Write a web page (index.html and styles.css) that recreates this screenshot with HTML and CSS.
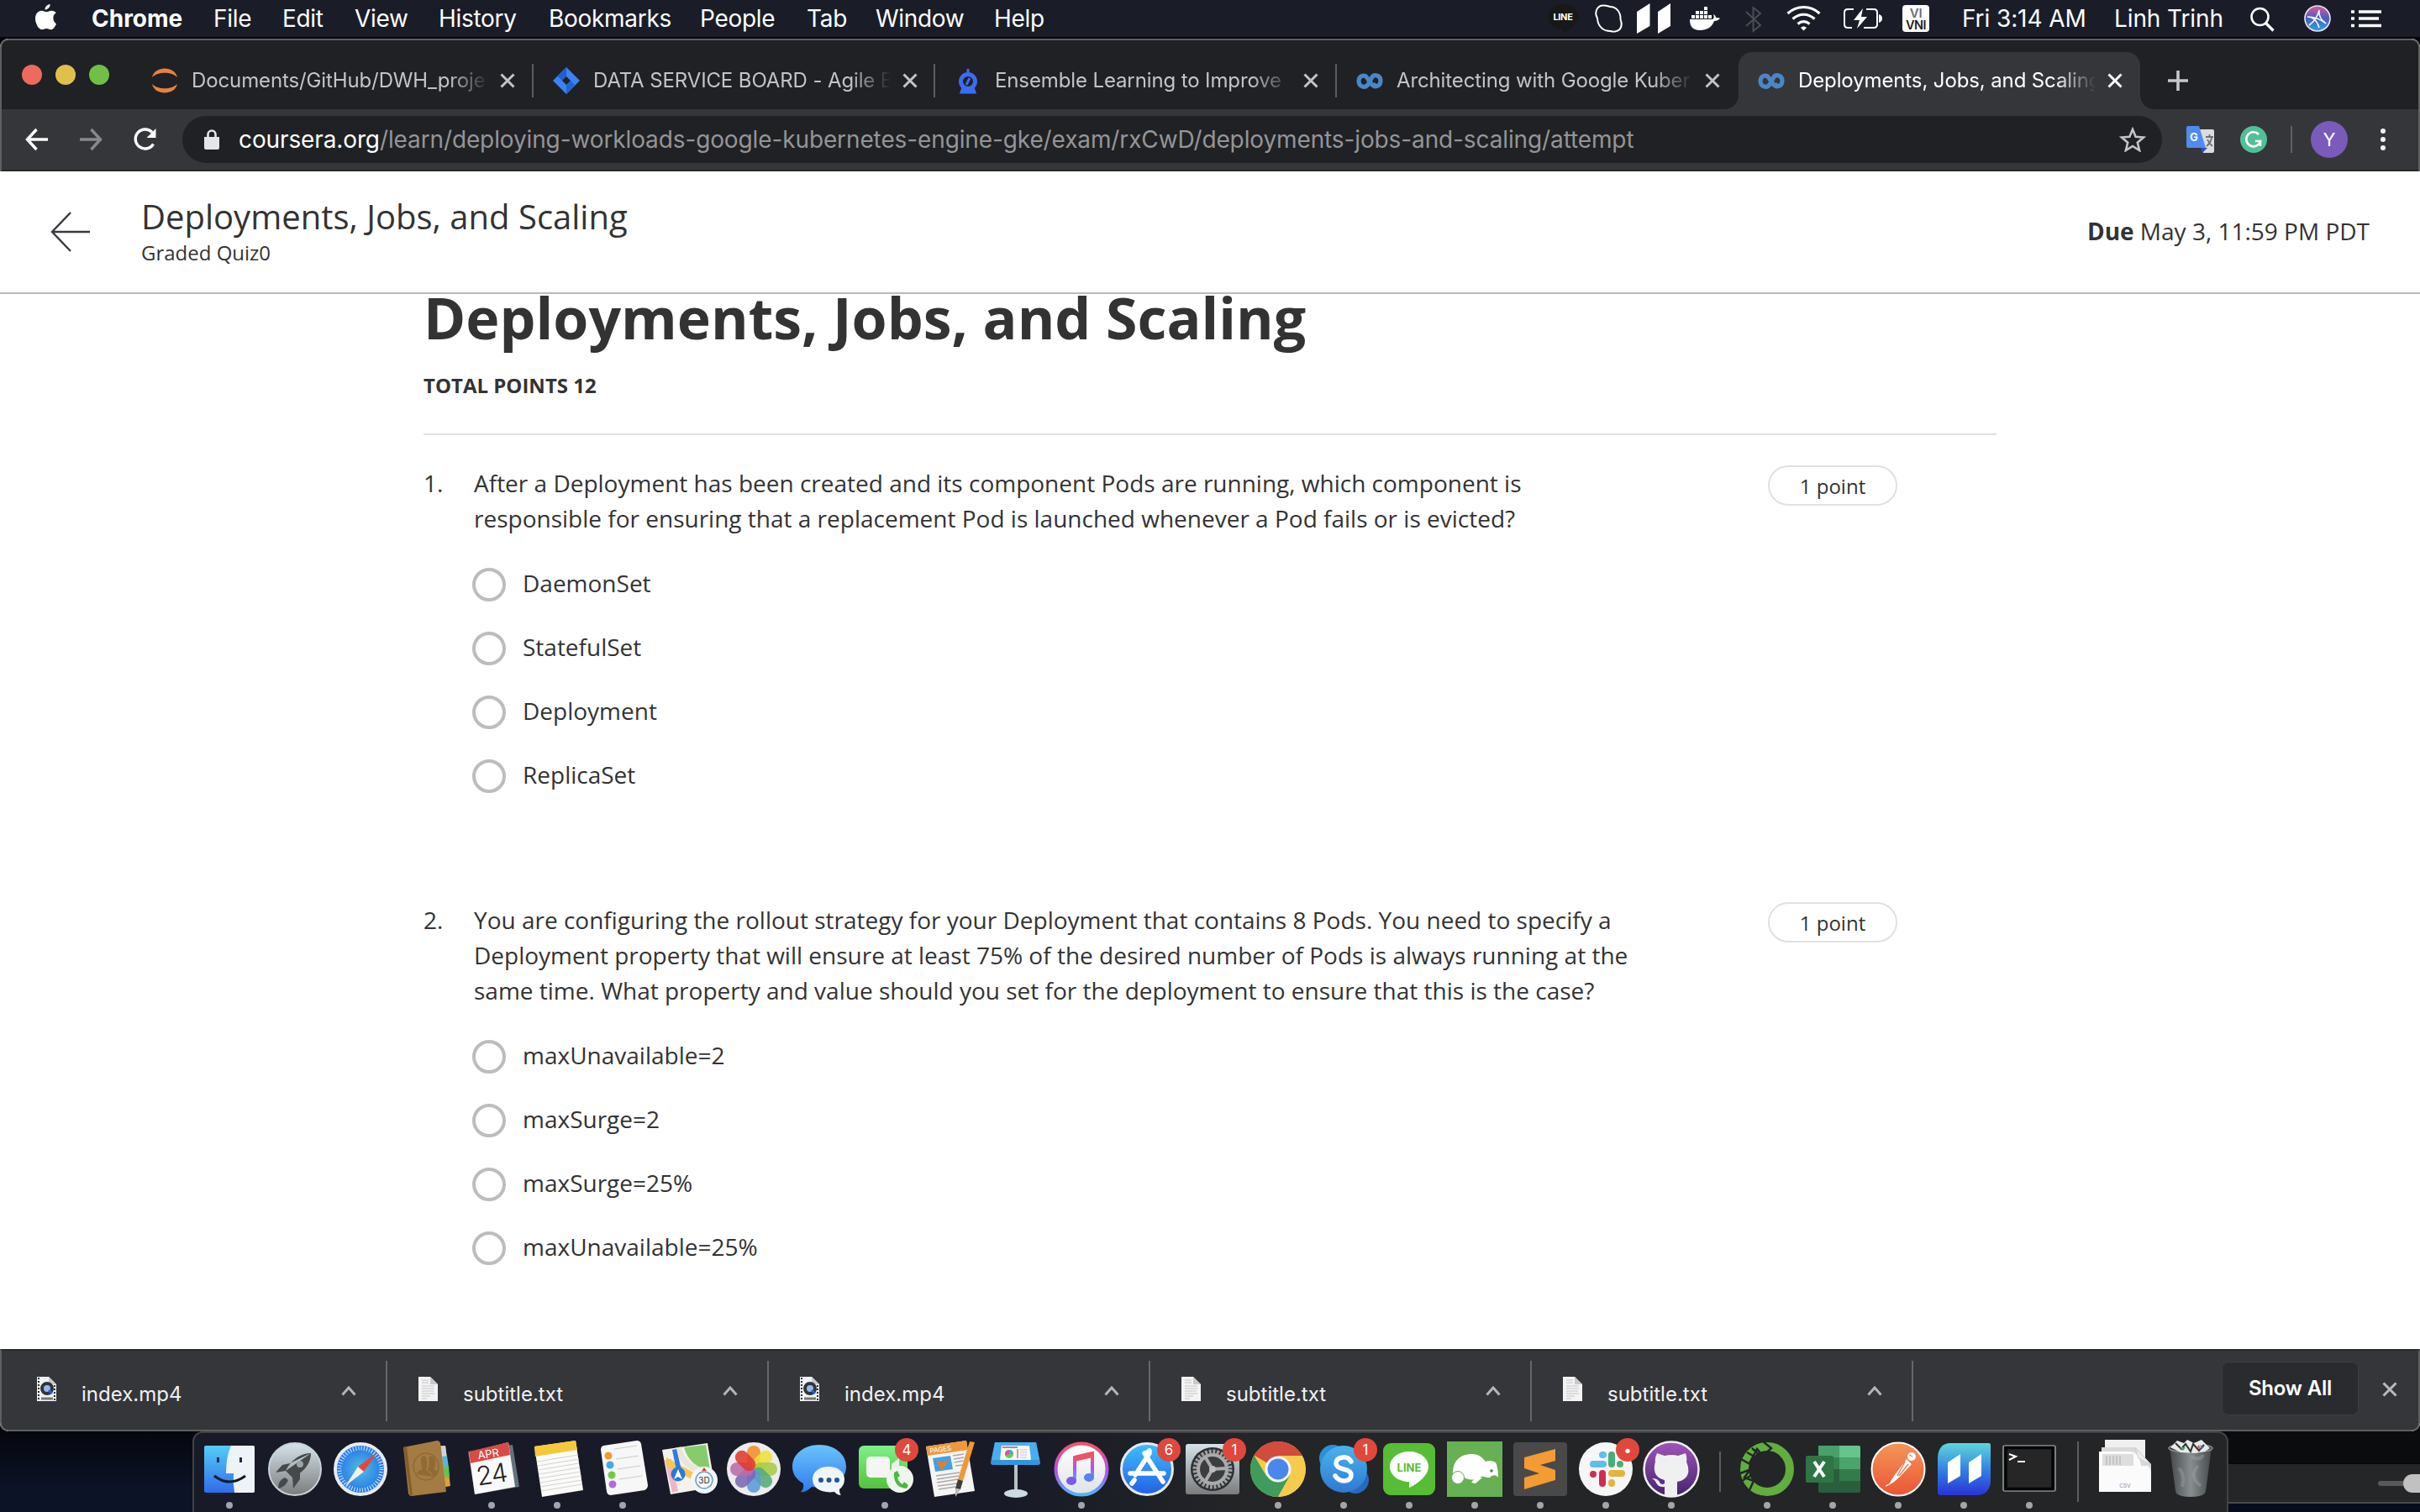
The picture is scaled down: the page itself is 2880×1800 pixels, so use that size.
FILE: index.html
```html
<!DOCTYPE html>
<html lang="en">
<head>
<meta charset="utf-8">
<title>Deployments, Jobs, and Scaling</title>
<link rel="stylesheet" href="styles.css">
</head>
<body>
<svg class="defs" width="0" height="0" aria-hidden="true">
  <defs>
    <linearGradient id="gFinder" x2="0" y2="1"><stop stop-color="#55cdf8"/><stop offset="1" stop-color="#2f6cea"/></linearGradient>
    <linearGradient id="gSilver" x2="0" y2="1"><stop stop-color="#d6e2ea"/><stop offset="1" stop-color="#7b7c7c"/></linearGradient>
    <radialGradient id="gSafari"><stop stop-color="#4fc0dc"/><stop offset="1" stop-color="#2372ea"/></radialGradient>
    <linearGradient id="gMsg" x2="0" y2="1"><stop stop-color="#6cc3fb"/><stop offset="1" stop-color="#2f7cf0"/></linearGradient>
    <linearGradient id="gGreen" x2="0" y2="1"><stop stop-color="#7df08a"/><stop offset="1" stop-color="#53c33b"/></linearGradient>
    <linearGradient id="gTunes" x2="0" y2="1"><stop stop-color="#f2566a"/><stop offset=".55" stop-color="#b052ea"/><stop offset="1" stop-color="#50b4f8"/></linearGradient>
    <linearGradient id="gStore" x2="0" y2="1"><stop stop-color="#3fc0fa"/><stop offset="1" stop-color="#245ee8"/></linearGradient>
    <linearGradient id="gSkype" x2="0" y2="1"><stop stop-color="#49b4ee"/><stop offset="1" stop-color="#2f79d2"/></linearGradient>
    <linearGradient id="gHub" x2="0" y2="1"><stop stop-color="#a255b8"/><stop offset="1" stop-color="#44246f"/></linearGradient>
    <linearGradient id="gPost" x2="0" y2="1"><stop stop-color="#f3975a"/><stop offset="1" stop-color="#ec5534"/></linearGradient>
    <linearGradient id="gM" x2="0" y2="1"><stop stop-color="#5fd6dc"/><stop offset=".5" stop-color="#3383e2"/><stop offset="1" stop-color="#2a32d8"/></linearGradient>
    <linearGradient id="gTrash"><stop stop-color="#44484b"/><stop offset=".5" stop-color="#888d90"/><stop offset="1" stop-color="#45494c"/></linearGradient>
    <linearGradient id="gWhite" x2="0" y2="1"><stop stop-color="#fff"/><stop offset="1" stop-color="#dfe3e6"/></linearGradient>
    <linearGradient id="gSiri" x2="0" y2="1"><stop stop-color="#e0559f"/><stop offset=".5" stop-color="#4a5bc0"/><stop offset="1" stop-color="#2fa6e0"/></linearGradient>
    <symbol id="coursera" viewBox="0 0 32 20"><path d="M23.5 13.3C21.8 16 19.8 16.5 18 14L12.8 6.4C10.5 3 4 3 3 10c0 8 8 9 11 4.800l4.500-8.300C21 2 29 3 29 10c0 7-7 8.500-9.500 5" fill="none" stroke="#4a86c8" stroke-width="5.200"/></symbol>
    <symbol id="x" viewBox="0 0 18 18"><path d="M1.500 1.500l15 15M16.500 1.500l-15 15" fill="none" stroke="currentColor" stroke-width="3"/></symbol>
    <symbol id="chev" viewBox="0 0 18 12"><path d="M1.500 10.500L9 2l7.500 8.500" fill="none" stroke="#b4b5b7" stroke-width="3"/></symbol>
    <symbol id="movie" viewBox="0 0 24 32"><path d="M0 1h14l9 9v20H0z" fill="#f1f2f3"/><path d="M14 1v9h9z" fill="#c8c9ca"/><path d="M2 2v27M21 11v18" stroke="#333" stroke-width="2" stroke-dasharray="2 2"/><circle cx="12" cy="15" r="6" fill="#9db8e8" stroke="#30343c" stroke-width="4"/><path d="M14 17l4 4" stroke="#2466d8" stroke-width="3"/><path d="M5 27h14" stroke="#777" stroke-width="3"/></symbol>
    <symbol id="page" viewBox="0 0 24 32"><path d="M0 1h14l9 9v20H0z" fill="#f3f3f3"/><path d="M14 1v9h9z" fill="#c8c9ca"/><path d="M4 5h8M4 8h8M4 12h15M4 15h15M4 18h14M4 21h15M4 24h10M4 27h6" stroke="#c6c6c6"/></symbol>
  </defs>
</svg>

<header class="menubar">
  <svg class="apple" width="28" height="34" viewBox="0 0 28 34"><path fill="#fff" d="M19 1c.3 3.600-3 7-6.200 6.800C12.400 4.500 15.600 1.300 19 1zM26.500 25.500c-1.700 3.700-3.700 7-6.300 7-2 0-2.800-1.300-5.600-1.300S11 32.500 9 32.500C4.800 32.500 1 24.500 1 18.800 1 12.600 4.700 9 8.600 9c2.500 0 4.300 1.500 6 1.500S18.200 9 21 9c2.200 0 4 1 5.300 2.800-5 3-4.300 10.500.2 13.700z" transform="scale(.98 .96)"/></svg>
  <nav class="menus"><b>Chrome</b><span>File</span><span>Edit</span><span>View</span><span>History</span><span>Bookmarks</span><span>People</span><span>Tab</span><span>Window</span><span>Help</span></nav>
  <div class="tray">
    <svg width="50" height="44" viewBox="1840 0 50 44"><path d="M1860 5c10 0 18 6 18 15 0 8-10 15-18 20v-5c-10 0-18-6-18-15s8-15 18-15z" fill="#171817"/><text x="1860" y="24" font-size="11" font-weight="700" letter-spacing="-.3" text-anchor="middle" fill="#fff">LINE</text></svg>
    <svg width="50" height="44" viewBox="1890 0 50 44"><path d="M1907 6.500c4-.5 7 1 9 1.500 8 0 13 7 12.500 15 2 5 1.500 9-1 12-3 3-8 3-11 2-9 0-15-6-15.500-15-2-4-2-9 0-12 2-2.500 4-3.500 6-3.500z" fill="none" stroke="#fff" stroke-width="2"/></svg>
    <svg width="60" height="44" viewBox="1940 0 60 44"><path d="M1948 14l15.500-10v27L1948 40zM1973 14l15-10v27l-15 9z" fill="#fff"/></svg>
    <svg width="60" height="44" viewBox="2000 0 60 44"><path d="M2011 23h27c2-1 2-4 1-6 2 1 3 2 3 4 2 0 4 0 5 1-2 2-4 3-7 3-3 8-9 11-17 11-9 0-12-5-12-13zM2013 18h4v4h-4zM2018 18h4v4h-4zM2023 18h4v4h-4zM2028 18h4v4h-4zM2033 18h4v4h-4zM2018 13h4v4h-4zM2023 13h4v4h-4zM2028 13h4v4h-4zM2028 8h4v4h-4z" fill="#fff"/></svg>
    <svg width="50" height="44" viewBox="2060 0 50 44"><path d="M2078 14l17 16-8.500 7V9l8.500 7-17 15" fill="none" stroke="#4a4d55" stroke-width="2"/></svg>
    <svg width="70" height="44" viewBox="2110 0 70 44"><path d="M2127.500 16c11-10 27-10 38 0M2133.500 22.500c8-7 18-7 26 0M2139.500 28.500c5-4 9-4 14 0" fill="none" stroke="#fff" stroke-width="3.200"/><path d="M2143 33c2-2 5-2 7 0l-3.500 3.500z" fill="#fff"/></svg>
    <svg width="70" height="44" viewBox="2180 0 70 44"><path d="M2206 11h-7q-4 0-4 4v14q0 4 4 4h5M2221 11h9q4 0 4 4v14q0 4-4 4h-12" fill="none" stroke="#fff" stroke-width="2"/><path d="M2217 10l-11 14h7l-3 10 12-14h-7zM2236 17q4 1 4 5t-4 5z" fill="#fff"/></svg>
    <svg width="70" height="44" viewBox="2250 0 70 44"><rect x="2264" y="6" width="32" height="32" rx="4" fill="#fff"/><text x="2280" y="21" font-size="15" font-weight="600" text-anchor="middle" fill="#6b6e75">VI</text><text x="2280" y="35" font-size="14.500" font-weight="600" letter-spacing="-.5" text-anchor="middle" fill="#1c1f28">VNI</text></svg>
    <span class="clock">Fri 3:14 AM</span>
    <span class="user">Linh Trinh</span>
    <svg width="70" height="44" viewBox="2660 0 70 44"><circle cx="2689.500" cy="20" r="10" fill="none" stroke="#fff" stroke-width="2.600"/><path d="M2696.500 27.500l9 9" stroke="#fff" stroke-width="3.200"/></svg>
    <svg width="60" height="44" viewBox="2730 0 60 44"><circle cx="2758" cy="22" r="15" fill="url(#gSiri)" stroke="#e6e8ee" stroke-width="1.600"/><path d="M2748 30q9-6 12-18-1 10 8 16-10-8-22-8 10 0 14 13" fill="none" stroke="#eafcff" stroke-width="1.600"/></svg>
    <svg width="90" height="44" viewBox="2790 0 90 44"><path d="M2798 14h4M2807 14h27M2798 22h4M2807 22h24M2798 30.500h4M2807 30.500h27" stroke="#fff" stroke-width="3.600"/></svg>
  </div>
</header>

<section class="window">
  <div class="tabstrip">
    <div class="lights"><i class="red"></i><i class="yellow"></i><i class="green"></i></div>
    <div class="tab">
      <svg width="32" height="32" viewBox="0 0 32 32"><path d="M1 12C4-2 28-2 31 12 24 5 8 5 1 12zM1 20c3 14 27 14 30 0-7 7-23 7-30 0z" fill="#e8823e"/></svg>
      <span class="title">Documents/GitHub/DWH_proje</span><svg class="close" width="18" height="18"><use href="#x"/></svg>
    </div>
    <div class="tab">
      <svg width="32" height="32" viewBox="0 0 32 32"><path d="M16 0l16 16-16 16L0 16z" fill="#3b82f6"/><path d="M16 0v11l-5 5L5.500 10.500z" fill="#1f5fd0"/><path d="M16 32V21l5-5 5.500 5.500z" fill="#2463d6"/><path d="M16 11l5 5-5 5-5-5z" fill="#202124"/></svg>
      <span class="title">DATA SERVICE BOARD - Agile B</span><svg class="close" width="18" height="18"><use href="#x"/></svg>
    </div>
    <div class="tab">
      <svg width="32" height="32" viewBox="0 0 32 32"><path d="M16 2v6M8 30l2-6h12l2 6z" stroke="#3a6df0" stroke-width="3" fill="#3a6df0"/><circle cx="16" cy="17" r="8.500" fill="#202124" stroke="#3a6df0" stroke-width="5"/><path d="M18 13l-4 8" stroke="#3a6df0" stroke-width="3"/></svg>
      <span class="title">Ensemble Learning to Improve</span><svg class="close" width="18" height="18"><use href="#x"/></svg>
    </div>
    <div class="tab last">
      <svg width="32" height="20"><use href="#coursera"/></svg>
      <span class="title">Architecting with Google Kuber</span><svg class="close" width="18" height="18"><use href="#x"/></svg>
    </div>
    <div class="tab active">
      <svg width="32" height="20"><use href="#coursera"/></svg>
      <span class="title">Deployments, Jobs, and Scaling</span><svg class="close" width="18" height="18"><use href="#x"/></svg>
    </div>
    <svg class="plus" width="24" height="24" viewBox="0 0 24 24"><path d="M12 0v24M0 12h24" stroke="#c6c7c9" stroke-width="3.600"/></svg>
  </div>

  <div class="toolbar">
    <svg width="28" height="28" viewBox="0 0 28 28"><path d="M13.500 2L2.500 14l11 12M3 14h24" fill="none" stroke="#fff" stroke-width="3.400"/></svg>
    <svg class="fwd" width="28" height="28" viewBox="0 0 28 28"><path d="M14.500 2l11 12-11 12M25 14H1" fill="none" stroke="#88898c" stroke-width="3.400"/></svg>
    <svg class="reload" width="30" height="30" viewBox="0 0 30 30"><path d="M24.500 20.500A11.500 11.500 0 1 1 23 6.500" fill="none" stroke="#fff" stroke-width="3.400"/><path d="M27.500 2v11H16.500z" fill="#fff"/></svg>
    <div class="omnibox">
      <svg width="18" height="24" viewBox="0 0 18 24"><path d="M0 9h18v13q0 2-2 2H2q-2 0-2-2z" fill="#e4e5e7"/><path d="M4.500 10V6a4.500 4.500 0 0 1 9 0v4" fill="none" stroke="#e4e5e7" stroke-width="2.600"/></svg>
      <span class="url"><em>coursera.org</em>/learn/deploying-workloads-google-kubernetes-engine-gke/exam/rxCwD/deployments-jobs-and-scaling/attempt</span>
      <svg class="star" width="32" height="30" viewBox="0 0 32 30"><path d="M16 3l3.600 8.800 9.400.7-7.200 6.200 2.300 9.300-8.100-5-8.100 5 2.300-9.300L3 12.500l9.400-.7z" fill="none" stroke="#c4c5c7" stroke-width="2.600"/></svg>
    </div>
    <svg class="translate" width="34" height="34" viewBox="0 0 34 34"><path d="M14 5h17q2 0 2 2v24q0 2-2 2H20z" fill="#dcdcdc"/><path d="M17 27h8l-6 6z" fill="#2f4fb8"/><path d="M2 1h13l8 26H2q-2 0-2-2V3q0-2 2-2z" fill="#4f8bf0"/><path d="M23 14h9M27.500 11v3M24 25q5-4 6-10M25 17q2 5 6 8" stroke="#6a6f78" stroke-width="1.800" fill="none"/><text x="4" y="19" font-size="13" font-weight="700" fill="#fff">G</text></svg>
    <svg class="gram" width="32" height="32" viewBox="0 0 32 32"><circle cx="16" cy="16" r="16" fill="#52bf98"/><path d="M22 10a8.500 8.500 0 1 0 2 8h-6M24 18v6" fill="none" stroke="#fff" stroke-width="2.600"/></svg>
    <i class="rule"></i>
    <div class="avatar">Y</div>
    <svg class="kebab" width="8" height="28" viewBox="0 0 8 28"><g fill="#f1f1f1"><circle cx="4" cy="4" r="3"/><circle cx="4" cy="14" r="3"/><circle cx="4" cy="24" r="3"/></g></svg>
  </div>

  <div class="quizbar">
    <svg width="48" height="48" viewBox="0 0 48 48"><path d="M24 1L2 24l22 23M2 24h45" fill="none" stroke="#373a3f" stroke-width="2.400"/></svg>
    <div class="heading"><div class="name">Deployments, Jobs, and Scaling</div><div class="kind">Graded Quiz0</div></div>
    <div class="due"><b>Due</b> May 3, 11:59 PM PDT</div>
  </div>

  <main class="quiz">
    <h1>Deployments, Jobs, and Scaling</h1>
    <div class="total">TOTAL POINTS 12</div>
    <section class="question">
      <span class="num">1.</span>
      <div>
        <p>After a Deployment has been created and its component Pods are running, which component is<br>responsible for ensuring that a replacement Pod is launched whenever a Pod fails or is evicted?</p>
        <ul><li>DaemonSet</li><li>StatefulSet</li><li>Deployment</li><li>ReplicaSet</li></ul>
      </div>
      <span class="points">1 point</span>
    </section>
    <section class="question">
      <span class="num">2.</span>
      <div>
        <p>You are configuring the rollout strategy for your Deployment that contains 8 Pods. You need to specify a<br>Deployment property that will ensure at least 75% of the desired number of Pods is always running at the<br>same time. What property and value should you set for the deployment to ensure that this is the case?</p>
        <ul><li>maxUnavailable=2</li><li>maxSurge=2</li><li>maxSurge=25%</li><li>maxUnavailable=25%</li></ul>
      </div>
      <span class="points">1 point</span>
    </section>
  </main>

  <footer class="downloads">
    <div class="file"><svg width="24" height="32"><use href="#movie"/></svg><span>index.mp4</span><svg class="chev" width="18" height="12"><use href="#chev"/></svg></div>
    <div class="file"><svg width="24" height="32"><use href="#page"/></svg><span>subtitle.txt</span><svg class="chev" width="18" height="12"><use href="#chev"/></svg></div>
    <div class="file"><svg width="24" height="32"><use href="#movie"/></svg><span>index.mp4</span><svg class="chev" width="18" height="12"><use href="#chev"/></svg></div>
    <div class="file"><svg width="24" height="32"><use href="#page"/></svg><span>subtitle.txt</span><svg class="chev" width="18" height="12"><use href="#chev"/></svg></div>
    <div class="file"><svg width="24" height="32"><use href="#page"/></svg><span>subtitle.txt</span><svg class="chev" width="18" height="12"><use href="#chev"/></svg></div>
    <button class="showall">Show All</button>
    <svg class="dismiss" width="18" height="18"><use href="#x"/></svg>
  </footer>
</section>

<div class="desk">
<div class="dock">
  <div class="app on"><svg viewBox="0 0 78 94"><rect x="9" y="15" width="60" height="56" rx="2" fill="url(#gFinder)"/><path d="M41 15h26q2 0 2 2v52q0 2-2 2H45q-2-12-1-23h-9q0-20 6-33z" fill="#eef3f8"/><path d="M25.500 29v6M52.500 29v6" stroke="#1c2c42" stroke-width="3"/><path d="M21 51q18 14 37 0" fill="none" stroke="#111c2a" stroke-width="3"/></svg></div>
  <div class="app"><svg viewBox="0 0 78 94"><circle cx="39" cy="43" r="31" fill="url(#gSilver)" stroke="#c7d3db" stroke-width="2"/><path d="M58 24c-14 0-25 10-30 21l-12 2 8-9 9-2m-5 9l8 8c11-5 22-15 22-29zM36 53l1 13 8-11v-8zM27 53q-8 3-8 13 9-2 12-10z" fill="#45494c"/><circle cx="45" cy="37" r="4" fill="#9aa4aa"/></svg></div>
  <div class="app"><svg viewBox="0 0 78 94"><circle cx="39" cy="43" r="30" fill="url(#gSafari)" stroke="#e8ebee" stroke-width="4"/><circle cx="39" cy="43" r="25" fill="none" stroke="#d9ecfb" stroke-width="5" stroke-dasharray="1 2.270"/><path d="M59 23L43 46l-7-6z" fill="#e8463c"/><path d="M21 63l15-23 7 6z" fill="#f0f0f0"/></svg></div>
  <div class="app"><svg viewBox="0 0 78 94"><path d="M54 15l8 0 6 48-10 2z" fill="#e0a03a"/><path d="M57 16l5-1 2 15-6 1z" fill="#ccd5da"/><path d="M58 28l6-1 2 14-6 1z" fill="#52b8de"/><path d="M60 40l6-1 1 13-6 1z" fill="#63c456"/><path d="M12 17l40-8q3 0 4 3l7 58-41 5q-3 0-4-3z" fill="#a47b43"/><path d="M12 17l4-1 7 58-3 0z" fill="#835e2e"/><ellipse cx="39" cy="40" rx="15" ry="16" fill="none" stroke="#906a35" stroke-width="1.500"/><path d="M27 49q4-6 8-5-5-17 2-17 5 3 2 17 6 3 7 8zM42 29q7-4 8 4 0 7-2 10l5 3q-2 5-6 6-1-6-6-8 3-8 1-15z" fill="#906a35"/></svg></div>
  <div class="app on"><svg viewBox="0 0 78 94"><path d="M11 22l53-8 8 50-53 9z" fill="#64727c"/><path d="M12 23l47-12 8 53-48 9z" fill="#fafafa"/><path d="M12 22l47-11 2 15-47 10z" fill="#da4a44"/><g transform="rotate(-9 39 43)"><text x="38" y="29" font-size="13" fill="#fff" text-anchor="middle">APR</text><text x="38" y="60" font-size="31" font-weight="300" letter-spacing="-1" fill="#222" text-anchor="middle">24</text></g></svg></div>
  <div class="app on"><svg viewBox="0 0 78 94"><path d="M12 16l49-7 9 59-49 8z" fill="#fbfbf8"/><path d="M12 16l49-7 2 11-50 8z" fill="#f5c93c"/><path d="M15 34l49-8M16 39l49-8M16 44l49-8M17 49l49-8M18 54l49-8M19 59l49-8M19 64l49-8M20 69l49-8" stroke="#d2d3d3"/></svg></div>
  <div class="app on"><svg viewBox="0 0 78 94"><path d="M16 15l40-6q4 0 5 4l8 49q0 4-4 6l-40 6q-4 0-5-4l-7-50q0-4 3-5z" fill="#f7f7f8"/><circle cx="22" cy="27" r="4.500" fill="#f09a36"/><circle cx="24" cy="38" r="4.500" fill="#45a9ef"/><circle cx="26" cy="50" r="4.500" fill="#6fcb47"/><circle cx="27" cy="61" r="4.500" fill="#b56bdc"/><path d="M29 19l27-4M31 31l27-4M33 43l27-4M35 55l27-4" stroke="#ccc"/></svg></div>
  <div class="app"><svg viewBox="0 0 78 94"><path d="M8 20l54-8 9 52-53 9z" fill="#f4f2ec"/><path d="M11 32l8-1 8 38-7 2z" fill="#f2b7c3"/><path d="M13 29l50 28-1 8-49-26z" fill="#f6c84e"/><path d="M34 17l26-3 5 30q-24-3-31-27z" fill="#86cc6c"/><path d="M27 17q5 24 38 33" fill="none" stroke="#e9e5da" stroke-width="7"/><path d="M20 20l5-1 7 29-6 1z" fill="#2f7be0"/><circle cx="27" cy="49" r="8.500" fill="#2b79dc"/><path d="M27 43l5 12-5-3-5 3z" fill="#fff"/><circle cx="58" cy="56" r="16" fill="#f3f6f8"/><circle cx="58" cy="56" r="10" fill="none" stroke="#6ca2c0" stroke-width="1.500"/><text x="58" y="60" font-size="10" fill="#333" text-anchor="middle">3D</text><path d="M58 41l3 4h-6z" fill="#e23b30"/></svg></div>
  <div class="app"><svg viewBox="0 0 78 94"><circle cx="39" cy="43" r="32" fill="#ececec"/><g fill-opacity=".88"><rect x="31" y="15" width="16" height="28" rx="8" fill="#f08f2c"/><rect x="31" y="15" width="16" height="28" rx="8" fill="#efdf3c" transform="rotate(45 39 43)"/><rect x="31" y="15" width="16" height="28" rx="8" fill="#a9cb48" transform="rotate(90 39 43)"/><rect x="31" y="15" width="16" height="28" rx="8" fill="#55ab78" transform="rotate(135 39 43)"/><rect x="31" y="15" width="16" height="28" rx="8" fill="#5b9bd8" transform="rotate(180 39 43)"/><rect x="31" y="15" width="16" height="28" rx="8" fill="#7c68b8" transform="rotate(225 39 43)"/><rect x="31" y="15" width="16" height="28" rx="8" fill="#bb6ca6" transform="rotate(270 39 43)"/><rect x="31" y="15" width="16" height="28" rx="8" fill="#e23a2e" transform="rotate(315 39 43)"/></g></svg></div>
  <div class="app"><svg viewBox="0 0 78 94"><path d="M39 14c18 0 32 11 32 26S57 65 39 65l-9-1q-7 7-13 6 4-3 3-10C11 55 7 48 7 40c0-15 14-26 32-26z" fill="url(#gMsg)"/><path d="M50 40c11 0 19 6 19 15 0 5-2 9-6 12 0 4 1 6 2 7-4 0-6-2-8-4-15 2-26-4-26-15 0-9 8-15 19-15z" fill="#eef6fc"/><g fill="#245398"><circle cx="41" cy="56" r="3"/><circle cx="50.500" cy="56" r="3"/><circle cx="60" cy="56" r="3"/></g></svg></div>
  <div class="app on"><svg viewBox="0 0 78 94"><rect x="8" y="15" width="58" height="51" rx="6" fill="url(#gGreen)"/><rect x="17" y="28" width="28" height="25" rx="5" fill="#f3f6f2"/><path d="M47 37l9-7v20l-9-3z" fill="#eee"/><circle cx="57" cy="55" r="16" fill="#f1f5f0"/><path d="M50 47l4-2 3 6-3 2q1 5 6 8l2-3 5 4-2 4q-16-1-15-19z" fill="#45bd3c"/></svg><b class="badge">4</b></div>
  <div class="app"><svg viewBox="0 0 78 94"><path d="M10 16l48-7 10 60-48 7z" fill="#f5f5f4"/><path d="M10 16l48-7 2 11-48 7z" fill="#f0983a"/><text x="15" y="24" font-size="8" fill="#fff" transform="rotate(-8 15 24)">PAGES</text><path d="M18 30l21-3 3 16-21 3z" fill="#3fa2e8"/><path d="M22 33l7 2 8-3-4 7-5 5z" fill="#ea7c24"/><path d="M42 27l13-2M43 31l12-2M44 35l10-2M45 39l9-1M22 51l28-4M23 55l26-4M23 59l25-4M24 63l23-3M25 67l20-3" stroke="#aaa" stroke-width="1.500"/><path d="M62 10l6 1-14 46-6-2z" fill="#ee9a34"/><path d="M48 55l6 2-3 10-6-1z" fill="#3d3d3d"/><path d="M45 66l6 1-6 9z" fill="#b9bdc0"/></svg></div>
  <div class="app"><svg viewBox="0 0 78 94"><path d="M37 36h4v36h-4z" fill="#b8c0c6"/><ellipse cx="39" cy="72" rx="14" ry="5" fill="#cbdae4"/><path d="M14 11h49l5 24q0 3-3 3H12q-3 0-3-3z" fill="#3196dd"/><path d="M14 11h49l4 21H10z" fill="#4aaeee"/><path d="M22 15h33l2 17H20z" fill="#f7f9fa"/><path d="M23 17h18" stroke="#777" stroke-width="1.500"/><circle cx="31" cy="25" r="5" fill="#6ccb4e"/><path d="M31 25v-5a5 5 0 0 0-4.500 7z" fill="#e34ca0"/><path d="M31 25l5 0a5 5 0 0 0-5-5z" fill="#45a6e8"/><path d="M41 19v11" stroke="#ef6a50" stroke-width="1.500"/><path d="M44 20h8M44 23h8M44 26h8M44 29h8" stroke="#c3c8cc"/></svg></div>
  <div class="app on"><svg viewBox="0 0 78 94"><circle cx="39" cy="43" r="30.500" fill="url(#gWhite)" stroke="url(#gTunes)" stroke-width="4"/><path d="M31 57V29l21-5v29" fill="none" stroke="url(#gTunes)" stroke-width="4"/><path d="M31 27l21-5v7l-21 5z" fill="#ec5468"/><ellipse cx="27" cy="57" rx="6" ry="5" fill="#7d5bea"/><ellipse cx="48" cy="53" rx="6" ry="5" fill="#5a82f0"/></svg></div>
  <div class="app"><svg viewBox="0 0 78 94"><circle cx="39" cy="43" r="30.500" fill="url(#gStore)" stroke="#e6eaef" stroke-width="3"/><path d="M36 24l22 34M42 24L25 50M19 48h40M24 56l-3 4M37 25l5-4" fill="none" stroke="#fff" stroke-width="5.500" stroke-linecap="round"/></svg><b class="badge">6</b></div>
  <div class="app"><svg viewBox="0 0 78 94"><rect x="7" y="13" width="64" height="60" rx="3" fill="url(#gSilver)"/><circle cx="39" cy="43" r="26" fill="#2d3032"/><circle cx="39" cy="43" r="21" fill="none" stroke="#9b9ea0" stroke-width="5" stroke-dasharray="3 1.700"/><circle cx="39" cy="43" r="17" fill="#3b3e40" stroke="#aaa" stroke-width="4"/><path d="M39 43l16-1M39 43L30 28M39 43l-9 15" stroke="#aaa" stroke-width="4"/><circle cx="39" cy="43" r="4" fill="#bbb"/></svg><b class="badge">1</b></div>
  <div class="app on"><svg viewBox="0 0 78 94"><circle cx="39" cy="43" r="33" fill="#f6cb4c"/><path d="M39 43L10.400 26.500A33 33 0 0 1 67.600 26.500z" fill="#d14b3e"/><path d="M39 27h28.600L39 43z" fill="#d14b3e"/><path d="M10.400 26.500A33 33 0 0 0 39 76l14-25-14-8-14 8z" fill="#3f9c5d"/><path d="M53 51L39 76a33 33 0 0 0 28.600-49H39z" fill="#f6cb4c"/><circle cx="39" cy="43" r="15.500" fill="#f6f6f6"/><circle cx="39" cy="43" r="12.500" fill="#4d86ea"/></svg></div>
  <div class="app on"><svg viewBox="0 0 78 94"><circle cx="26" cy="30" r="16" fill="#2f8ed4"/><circle cx="53" cy="56" r="16" fill="#2968bd"/><circle cx="39" cy="43" r="28" fill="url(#gSkype)"/><path d="M48 34q-4-6-10-5-8 1-8 7 0 5 9 7t9 7q0 6-8 7-7 0-11-6" fill="none" stroke="#fff" stroke-width="5.500" stroke-linecap="round"/></svg><b class="badge">1</b></div>
  <div class="app on"><svg viewBox="0 0 78 94"><rect x="8" y="12" width="62" height="62" rx="9" fill="#57bd35"/><path d="M39 22c13 0 23 8 23 18 0 11-14 21-23 25v-7c-13 0-23-8-23-18s10-18 23-18z" fill="#fff"/><text x="39" y="45.500" font-size="13" font-weight="700" fill="#57bd35" text-anchor="middle">LINE</text></svg></div>
  <div class="app on"><svg viewBox="0 0 78 94"><path d="M6 10h66v66H6z" fill="#67b054"/><path d="M13 48c0-16 10-23 23-23 8 0 12 4 16 9 5-2 11-1 13 3q2 7 2 16c-3-4-7-3-10 0-6 0-8-3-12 0-6 5-18 2-21-2-3-5-10-4-11-3z" fill="#fff"/><circle cx="19" cy="53" r="7.500" fill="#fff" stroke="#67b054"/><path d="M35 59q4-7 13-6l-8 7z" fill="#fff"/><circle cx="59" cy="45" r="1.800" fill="#478c3a"/></svg></div>
  <div class="app on"><svg viewBox="0 0 78 94"><rect x="7" y="11" width="64" height="64" rx="4" fill="#494949"/><path d="M20 29l37-10v14l-18 5 18 6v12L20 67V53l18-5-18-6z" fill="#f49b34"/></svg></div>
  <div class="app on"><svg viewBox="0 0 78 94"><circle cx="39" cy="43" r="32" fill="#f6f6f6"/><g stroke-width="8" stroke-linecap="round"><path d="M24 37h12M35 26h1" stroke="#5fbfe6"/><path d="M46 26v11M56 37h0" stroke="#4aae7b"/><path d="M46 48h12M46 59v1" stroke="#e5b33f"/><path d="M35 48v12M24 49h0" stroke="#cf2b56"/></g></svg><b class="badge">•</b></div>
  <div class="app on"><svg viewBox="0 0 78 94"><circle cx="39" cy="43" r="32.500" fill="url(#gHub)" stroke="#f2f0f4" stroke-width="2.500"/><path d="M22 24l9 3q8-2 16 0l9-3q2 6 1 10 8 20-11 24v17H31V64q-8 1-10-5-2-4-5-5 7-1 10 6 2 2 5 0v-4q-16-4-11-22-1-4 2-10z" fill="#f0f0f0"/></svg></div>
  <i class="split short"></i>
  <div class="app on"><svg viewBox="0 0 78 94"><circle cx="39" cy="43" r="27" fill="none" stroke="#61ad3f" stroke-width="10"/><path d="M34 10l10 8-10 9-7-8-9 17 12-10-9-8M8 31l14 8-10 14 11 4-5 11M7 48l13-5M9 57l15-9M15 23l9 5" fill="none" stroke="#232527" stroke-width="2.500"/></svg></div>
  <div class="app on"><svg viewBox="0 0 78 94"><rect x="22" y="15" width="50" height="56" rx="2" fill="#2b5e3c"/><path d="M22 15h25v14H22z" fill="#49a06b"/><path d="M47 15h23q2 0 2 2v12H47z" fill="#66c48c"/><path d="M22 29h25v14H22z" fill="#37804d"/><path d="M47 29h25v14H47z" fill="#4aa46c"/><path d="M47 43h25v14H47z" fill="#347b4b"/><rect x="7" y="27" width="33" height="32" rx="2" fill="#2f7445"/><path d="M17 34l12 18M29 34L17 52" stroke="#fff" stroke-width="4"/></svg></div>
  <div class="app on"><svg viewBox="0 0 78 94"><circle cx="39" cy="43" r="31.500" fill="url(#gPost)" stroke="#fff" stroke-width="2"/><circle cx="55" cy="28" r="5" fill="#fff"/><path d="M49 31l6 6-13 14-9 8-9 5q0-3 4-3l6-10z" fill="#fff"/><path d="M47 34l-9 17M51 37L40 51M52 26l4 2" stroke="#ef7344" stroke-width="1.300"/></svg></div>
  <div class="app on"><svg viewBox="0 0 78 94"><path d="M22 12h47q2 0 2 2v45q-2 14-15 15H11q-3 0-3-3V29q1-16 14-17z" fill="url(#gM)"/><path d="M20 35l15-10v26L20 60zM45 35l15-10v26L45 60z" fill="#fff"/></svg></div>
  <div class="app on"><svg viewBox="0 0 78 94"><rect x="8" y="15" width="62" height="54" rx="2" fill="#262626" stroke="#8e9599" stroke-width="1.600"/><rect x="11" y="17.500" width="56" height="49" fill="#262626" stroke="#060606" stroke-width="3.500"/><path d="M15 25l8 3-8 4M25 34h9" fill="none" stroke="#fff" stroke-width="2"/></svg></div>
  <i class="split"></i>
  <div class="app"><svg viewBox="0 0 78 94"><path d="M15 8h48v40H15z" fill="#f0f0f0"/><path d="M11 17h40l19 20v32H11z" fill="#d9d9d9"/><path d="M8 22h36q12 0 14 17h8q4 4 4 10v21H8z" fill="#fbfbfb"/><path d="M12 25h37v14H12z" fill="#dedede"/><path d="M51 17l19 21-15-8z" fill="#eee" stroke="#ccc"/><path d="M17 27v11M21 27v11M25 27v11M29 27v11M33 27v11" stroke="#c4c4c4" stroke-width="2"/><text x="39" y="65" font-size="6.500" fill="#888" text-anchor="middle">CSV</text></svg></div>
  <div class="app"><svg viewBox="0 0 78 94"><path d="M14 17l7 52q1 7 18 7t18-7l7-52z" fill="url(#gTrash)"/><path d="M25 42q8 8 4 22M40 28q10 6 14-2M48 39q-12 12 3 24" stroke="#a0a4a6" stroke-width="4" fill="none" opacity=".4"/><ellipse cx="39" cy="18" rx="26" ry="5" fill="#3d4144" stroke="#8a8f93" stroke-width="1.500"/><path d="M15 17l8-8 8 3 4-4 8 4 9-4 10 10-6 4-12 2-17-1z" fill="#e8e9e9"/><path d="M21 12l7 7 5-6 6 9 3-9 7 8 6-7" fill="none" stroke="#2e3234" stroke-width="2"/><path d="M46 17l3-3 2 6z" fill="#d9663a"/><path d="M26 17l7 0-3 4z" fill="#40a66a"/><path d="M50 14l5 3-3 2z" fill="#4478c8"/></svg></div>
</div>
<div class="behind"><div class="panel"><i class="track"></i><i class="knob"></i></div></div>
</div>
</body>
</html>
```
FILE: styles.css
```css
*, ::before, ::after { box-sizing: border-box; }
body {
  margin: 0;
  width: 2880px;
  height: 1800px;
  overflow: hidden;
  background: #05060a;
  font-family: Inter, "Liberation Sans", sans-serif;
  display: grid;
  grid-template-rows: 46px 1658px 96px;
}
svg { display: block; flex: none; }
i { font-style: normal; }
.defs { position: absolute; }

/* menu bar */
.menubar {
  height: 44px;
  background: #1a1d27;
  color: #fff;
  font-size: 28px;
  line-height: 44px;
  letter-spacing: -.3px;
  display: flex;
  padding-left: 41px;
}
.apple { margin-top: 4px; }
.menus {
  margin-left: 40px;
  display: grid;
  grid-template-columns: 145px 82px 86px 100px 131px 180px 127px 82px 141px 80px;
}
.menus b { font-weight: 700; letter-spacing: 0; }
.tray { margin-left: auto; display: flex; }
.tray span { white-space: nowrap; letter-spacing: -.1px; }
.clock { width: 182px; padding-left: 15px; }
.user { width: 158px; padding-left: 14px; }

/* browser window */
.window {
  display: flex;
  flex-direction: column;
  border-radius: 10px;
  overflow: hidden;
  background: #fff;
}
.tabstrip {
  height: 84px;
  flex: none;
  background: #202124;
  border: 2px solid #5d5f60;
  border-bottom: 0;
  border-radius: 10px 10px 0 0;
  display: flex;
  align-items: flex-end;
}
.lights { width: 155px; height: 82px; padding: 29px 0 0 24px; display: flex; gap: 16px; }
.lights i { width: 24px; height: 24px; border-radius: 50%; }
.red { background: #ed6a5e; }
.yellow { background: #e0c04c; }
.green { background: #72be47; }
.tab {
  width: 478px;
  height: 68px;
  padding: 0 22px 1px 23px;
  display: flex;
  align-items: center;
  color: #c3c4c6;
  font-size: 24px;
  letter-spacing: -.12px;
  background: linear-gradient(#5c5d60, #5c5d60) 100% 50% / 2px 40px no-repeat;
}
.tab .title {
  margin-left: 16px;
  width: 357px;
  white-space: nowrap;
  -webkit-mask-image: linear-gradient(90deg, #000 306px, transparent 354px);
  mask-image: linear-gradient(90deg, #000 306px, transparent 354px);
}
.tab .close { margin-left: 11px; }
.tab.last { background: none; }
.tab.active {
  position: relative;
  background: #35363a;
  border-radius: 16px 16px 0 0;
  color: #fff;
}
.tab.active::before, .tab.active::after {
  content: "";
  position: absolute;
  bottom: 0;
  width: 16px;
  height: 16px;
}
.tab.active::before { left: -16px; background: radial-gradient(circle at 0 0, transparent 15.5px, #35363a 16px); }
.tab.active::after { right: -16px; background: radial-gradient(circle at 100% 0, transparent 15.5px, #35363a 16px); }
.plus { margin: 0 0 22px 33px; }

.toolbar {
  height: 74px;
  flex: none;
  background: #35363a;
  border: solid #5d5f60;
  border-width: 0 2px;
  box-shadow: inset 0 -2px #28292b;
  padding: 0 0 2px 28px;
  display: flex;
  align-items: center;
}
.fwd { margin-left: 36px; }
.reload { margin-left: 36px; }
.omnibox {
  margin-left: 29px;
  width: 2356px;
  height: 56px;
  border-radius: 28px;
  background: #202124;
  padding: 0 19px 0 26px;
  display: flex;
  align-items: center;
}
.url { margin-left: 23px; font-size: 28px; letter-spacing: -.12px; color: #949597; white-space: nowrap; }
.url em { font-style: normal; color: #fff; }
.star { margin-left: auto; }
.translate { margin-left: 29px; }
.gram { margin-left: 30px; }
.rule { width: 2px; height: 32px; background: #5f6063; margin-left: 28px; }
.avatar {
  margin-left: 22px;
  width: 44px;
  height: 44px;
  border-radius: 50%;
  background: #7a5abb;
  color: #fff;
  font-size: 22px;
  line-height: 44px;
  text-align: center;
}
.kebab { margin-left: 38px; }

/* quiz header */
.quizbar {
  height: 146px;
  flex: none;
  border-bottom: 2px solid #bbb;
  background: #fff;
  color: #333;
  font-family: "Open Sans", sans-serif;
  padding: 0 60px;
  display: flex;
  align-items: center;
}
.heading { margin-left: 60px; padding-bottom: 3px; }
.name { font-size: 40px; line-height: 52px; }
.kind { font-size: 24px; line-height: 34px; }
.due { margin-left: auto; font-size: 28px; padding-bottom: 2px; }

/* quiz body */
.quiz {
  height: 1256px;
  flex: none;
  overflow: hidden;
  padding-left: 504px;
  color: #333;
  font-family: "Open Sans", sans-serif;
  display: flow-root;
}
.quiz h1 { margin: -18px 0 18px; font-size: 68px; line-height: 92px; font-weight: 700; }
.total {
  width: 1872px;
  height: 76px;
  font-size: 24px;
  font-weight: 700;
  line-height: 34px;
  border-bottom: 2px solid #e0e0e0;
  margin-bottom: 36px;
}
.question {
  display: grid;
  grid-template-columns: 60px 1540px 154px;
  align-items: start;
  margin-bottom: 112px;
  font-size: 28px;
  line-height: 42px;
}
.question p { margin: 0; white-space: nowrap; }
.question ul { list-style: none; margin: 20px 0 0; padding: 0; }
.question li { height: 76px; line-height: 72px; display: flex; align-items: flex-start; }
.question li::before {
  content: "";
  width: 40px;
  height: 40px;
  margin: 18px 20px 0 -2px;
  border: 4px solid #bdbdbd;
  border-radius: 50%;
}
.points {
  height: 48px;
  border: 2px solid #e1e1e1;
  border-radius: 24px;
  font-size: 24px;
  line-height: 45px;
  text-align: center;
}

/* downloads shelf */
.downloads {
  height: 98px;
  flex: none;
  background: #35363a;
  border: 2px solid #5d5f60;
  border-top-color: #28292b;
  border-radius: 0 0 10px 10px;
  padding: 12px 25px 0 5px;
  display: flex;
}
.file {
  width: 454px;
  height: 72px;
  border-right: 2px solid #66676a;
  padding: 18px 34px 0 37px;
  display: flex;
  color: #f1f1f1;
  font-size: 24px;
}
.file span { margin: 9px 0 0 29px; line-height: 26px; letter-spacing: 0; }
.file .chev { margin: 12px 1px 0 auto; }
.showall {
  margin-left: auto;
  width: 163px;
  height: 64px;
  margin-top: 1px;
  padding: 0;
  border: 1px solid #3d3e42;
  border-radius: 8px;
  background: #2a2b2e;
  color: #fff;
  font: 600 24px/62px Inter, sans-serif;
  letter-spacing: -.2px;
}
.dismiss { margin: 25px 0 0 28px; color: #b9babc; }

/* desktop strip with the dock */
.desk { display: flex; padding-left: 229px; background: linear-gradient(180deg, #05070e, #0c1326 70%); }
.dock {
  width: 2423px;
  height: 110px;
  flex: none;
  border: 2px solid #404244;
  border-radius: 12px;
  padding-left: 3px;
  display: flex;
  background: linear-gradient(90deg, #181b27 0, #181b27 40%, #232527 52%, #232527 100%);
}
.app { position: relative; width: 78px; height: 94px; flex: none; }
.app svg { width: 78px; height: 94px; }
.app.on::after {
  content: "";
  position: absolute;
  left: 35px;
  top: 82px;
  width: 8px;
  height: 8px;
  border-radius: 50%;
  background: #a2a5ab;
}
.badge {
  position: absolute;
  left: 51px;
  top: 6px;
  width: 28px;
  height: 28px;
  border-radius: 50%;
  background: #e0483c;
  color: #fff;
  font-size: 17px;
  font-weight: 400;
  line-height: 28px;
  text-align: center;
}
.split { width: 36px; padding: 10px 0 0 18px; flex: none; }
.split::before { content: ""; display: block; width: 2px; height: 72px; background: #5b5d5f; }
.split.short { padding-top: 22px; }
.split.short::before { height: 48px; }
.behind { flex: 1; height: 96px; padding-top: 38px; background: linear-gradient(#0b0c0d 86px, #080d1d 86px); }
.panel {
  height: 48px;
  background: #242627;
  border-top: 1px solid #060606;
  border-bottom: 2px solid #4a4b4c;
  display: flex;
  align-items: center;
  justify-content: flex-end;
}
.track { width: 30px; height: 6px; border-radius: 3px 0 0 3px; background: #58595a; }
.knob { width: 20px; height: 22px; border-radius: 11px 0 0 11px; background: #c1c1c1; }
```
